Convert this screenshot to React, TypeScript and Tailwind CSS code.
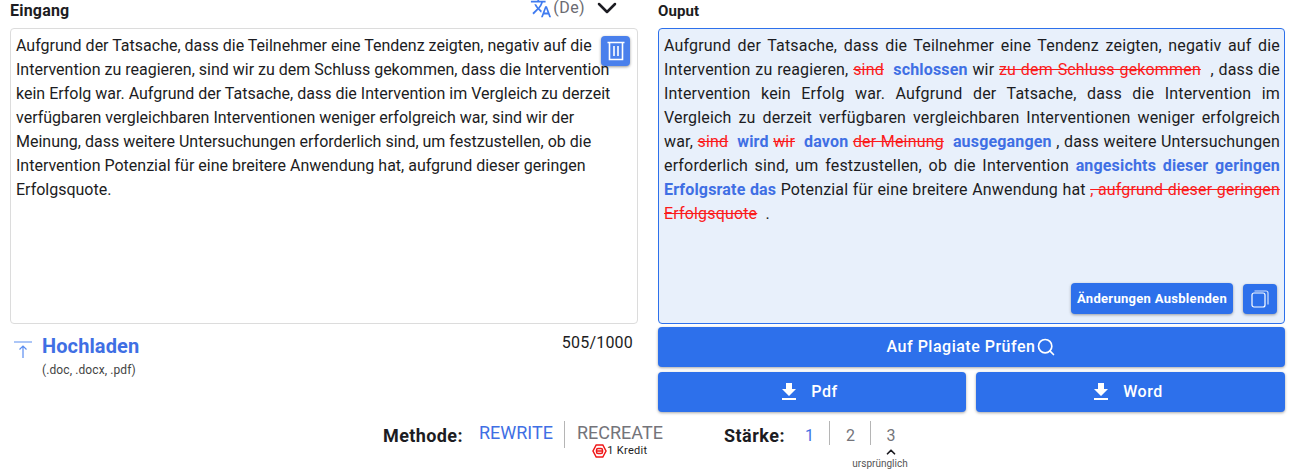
import { ChevronDown, ChevronUp, Search } from 'lucide-react'
import { MdFileDownload, MdTranslate } from 'react-icons/md'

const INPUT_TEXT = 'Aufgrund der Tatsache, dass die Teilnehmer eine Tendenz zeigten, negativ auf die Intervention zu reagieren, sind wir zu dem Schluss gekommen, dass die Intervention kein Erfolg war. Aufgrund der Tatsache, dass die Intervention im Vergleich zu derzeit verfügbaren vergleichbaren Interventionen weniger erfolgreich war, sind wir der Meinung, dass weitere Untersuchungen erforderlich sind, um festzustellen, ob die Intervention Potenzial für eine breitere Anwendung hat, aufgrund dieser geringen Erfolgsquote.'

function Del({ children }: { children: string }) {
  return <span className="text-[#fb1b1b] line-through">{children}</span>
}

function Add({ children }: { children: string }) {
  return <span className="font-bold text-[#3f6fe4]">{children}</span>
}

function TrashIcon() {
  return (
    <svg width="18" height="20" viewBox="0 0 18 20" fill="none" stroke="white" strokeWidth="1.6">
      <path d="M0.5 1.5h17M2.5 1.5v17h13v-17M7 5v10M11 5v10" />
    </svg>
  )
}

function UploadIcon() {
  return (
    <svg width="18" height="18" viewBox="0 0 18 18" fill="none" stroke="#5b8df0" strokeWidth="1.2">
      <path d="M0 1h18M9 17V5M5.5 8.5L9 5l3.5 3.5" />
    </svg>
  )
}

function CopyIcon() {
  return (
    <svg width="18" height="18" viewBox="0 0 18 18" fill="none" stroke="white" strokeWidth="1.2">
      <rect x="1" y="3" width="13" height="14" rx="2" />
      <path d="M3.5 1h11.5a2 2 0 0 1 2 2v11.5" opacity="0.8" />
    </svg>
  )
}

function CoinIcon() {
  return (
    <svg width="15" height="14" viewBox="0 0 15 14" fill="none" stroke="#f01818" strokeWidth="1.5">
      <path d="M4.2 1h6.6l3.2 6-3.2 6H4.2L1 7z" />
      <rect x="4.5" y="4.5" width="6" height="5" rx="1.5" />
      <path d="M4.5 7h6" />
    </svg>
  )
}

function BlueButton({ children, className }: { children: React.ReactNode; className: string }) {
  return (
    <button className={`flex h-[40px] items-center justify-center rounded bg-[#2d70eb] text-base font-medium tracking-[0.5px] text-white shadow-[0_1px_3px_rgba(0,0,0,0.35)] ${className}`}>
      {children}
    </button>
  )
}

export default function App() {
  return (
    <div className="h-[475px] w-[1297px] overflow-hidden bg-white font-['Roboto',sans-serif] text-[#1c1c22]">
      <div className="flex gap-[20px] pl-[10px] pr-[12px]">
        {/* Eingang */}
        <div className="w-[628px]">
          <div className="flex h-[28px] items-start justify-between">
            <span className="mt-[1px] text-base font-bold leading-[20px] tracking-[0.2px]">Eingang</span>
            <div className="mr-[15px] mt-[-8px] flex items-center text-[#6b6b72]">
              <MdTranslate size={22} className="text-[#3f7bf0]" />
              <span className="ml-[1px] text-base leading-[16px] tracking-[0.4px]">(De)</span>
              <ChevronDown size={32} strokeWidth={1.9} className="ml-[6px] text-[#1c1c22]" />
            </div>
          </div>
          <div className="relative h-[296px] rounded border border-[#dcdcdc] px-[5px] pb-[4px] pt-[5px] text-base leading-[24px]">
            {INPUT_TEXT}
            <button className="absolute right-[7px] top-[7px] flex h-[30px] w-[29px] items-center justify-center rounded bg-[#4a80ec] shadow-[0_1px_3px_rgba(0,0,0,0.4)]">
              <TrashIcon />
            </button>
          </div>
          <div className="mt-[11px] flex justify-between">
            <div className="flex pl-[4px]">
              <div className="pt-[6px]">
                <UploadIcon />
              </div>
              <div className="ml-[10px]">
                <div className="text-[20px] font-bold leading-[22px] tracking-[0.1px] text-[#3f6fe4]">Hochladen</div>
                <div className="mt-[6px] text-xs leading-[14px] tracking-[0.1px] text-[#444]">(.doc, .docx, .pdf)</div>
              </div>
            </div>
            <span className="mr-[5px] text-base leading-[16px] tracking-[0.2px]">505/1000</span>
          </div>
        </div>

        {/* Ouput */}
        <div className="w-[627px]">
          <div className="flex h-[28px] items-start">
            <span className="mt-[1px] text-[15px] font-bold leading-[20px] tracking-[0.1px]">Ouput</span>
          </div>
          <div className="relative h-[296px] rounded border border-[#2d70eb] bg-[#e8f0fb] pb-[4px] pl-[5px] pr-[4px] pt-[5px] text-justify text-base leading-[24px] tracking-[0.17px]">
            Aufgrund der Tatsache, dass die Teilnehmer eine Tendenz zeigten, negativ auf die Intervention zu reagieren, <Del>sind</Del>&nbsp; <Add>schlossen</Add> wir <Del>zu dem Schluss gekommen</Del>&nbsp; , dass die Intervention kein Erfolg war. Aufgrund der Tatsache, dass die Intervention im Vergleich zu derzeit verfügbaren vergleichbaren Interventionen weniger erfolgreich war, <Del>sind</Del>&nbsp; <Add>wird</Add> <Del>wir</Del>&nbsp; <Add>davon</Add> <Del>der Meinung</Del>&nbsp; <Add>ausgegangen</Add> , dass weitere Untersuchungen erforderlich sind, um festzustellen, ob die Intervention <Add>angesichts dieser geringen Erfolgsrate das</Add> Potenzial für eine breitere Anwendung hat <Del>, aufgrund dieser geringen Erfolgsquote</Del>&nbsp; .
            <div className="absolute bottom-[9px] right-[7px] flex items-center gap-[10px]">
              <button className="h-[31px] w-[162px] rounded bg-[#2d70eb] text-[13px] font-bold tracking-[0.3px] text-white shadow-[0_1px_3px_rgba(0,0,0,0.35)]">Änderungen Ausblenden</button>
              <button className="flex h-[30px] w-[34px] items-center justify-center rounded bg-[#2d70eb] shadow-[0_1px_3px_rgba(0,0,0,0.35)]">
                <CopyIcon />
              </button>
            </div>
          </div>
          <BlueButton className="mt-[3px] w-full">
            Auf Plagiate Prüfen
            <Search size={20} strokeWidth={2} className="ml-[1px]" />
          </BlueButton>
          <div className="mt-[5px] flex gap-[10px]">
            <BlueButton className="w-[308px] pr-[9px]"><MdFileDownload size={24} className="mr-[10px]" />Pdf</BlueButton>
            <BlueButton className="flex-1 pr-[9px]"><MdFileDownload size={24} className="mr-[10px]" />Word</BlueButton>
          </div>
        </div>
      </div>

      {/* Methode / Stärke */}
      <div className="mt-[1px] flex pl-[383px]">
        <span className="mt-[13px] text-[18px] font-bold leading-[20px] tracking-[0.4px]">Methode:</span>
        <div className="ml-[16px] mt-[10px] text-[18px] leading-[20px] text-[#3f6fe4]">REWRITE</div>
        <div className="ml-[11px] mt-[8px] h-[27px] w-px bg-[#b5b5b5]" />
        <div className="ml-[12px] mt-[10px] flex flex-col items-center">
          <span className="text-[18px] leading-[20px] text-[#74747a]">RECREATE</span>
          <span className="mt-[1px] flex items-center text-[11px] leading-[14px] tracking-[0.3px]"><CoinIcon />1 Kredit</span>
        </div>
        <span className="ml-[61px] mt-[13px] text-[18px] font-bold leading-[20px] tracking-[0.5px]">Stärke:</span>
        <span className="ml-[20px] mt-[13px] text-base leading-[20px] text-[#3f6fe4]">1</span>
        <div className="ml-[15px] mt-[8px] h-[24px] w-px bg-[#b5b5b5]" />
        <span className="ml-[16px] mt-[13px] text-base leading-[20px] text-[#74747a]">2</span>
        <div className="ml-[15px] mt-[8px] h-[24px] w-px bg-[#b5b5b5]" />
        <div className="ml-[-19px] mt-[13px] flex w-[78px] flex-col items-center">
          <span className="text-base leading-[20px] text-[#74747a]">3</span>
          <ChevronUp size={14} strokeWidth={3} className="-mt-[1px]" />
          <span className="-mt-[1px] -translate-x-[11px] text-[10px] leading-[12px] text-[#555]">ursprünglich</span>
        </div>
      </div>
    </div>
  )
}
